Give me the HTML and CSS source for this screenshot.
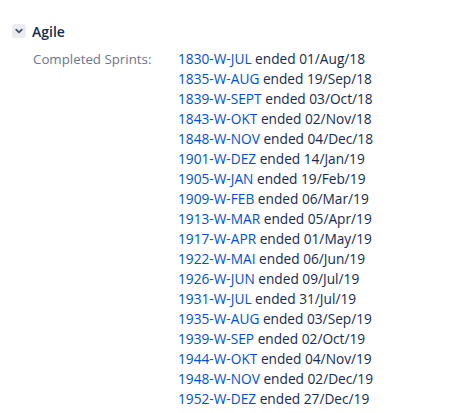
FILE: index.html
```html
<!DOCTYPE html>
<html>
<head>
<meta charset="utf-8">
<link rel="stylesheet" href="styles.css">
</head>
<body>
<div class="module">
  <div class="mod-header">
    <span class="toggle"><svg width="14" height="14" viewBox="0 0 14 14"><path d="M4.2 5.6 L7 8.4 L9.8 5.6" fill="none" stroke="#42526e" stroke-width="1.8" stroke-linecap="round" stroke-linejoin="round"/></svg></span>
    <h2 class="title">Agile</h2>
  </div>
  <div class="row">
    <div class="label">Completed Sprints:</div>
    <ul class="sprints">
      <li><a>1830-W-JUL</a> ended 01/Aug/18</li>
      <li><a>1835-W-AUG</a> ended 19/Sep/18</li>
      <li><a>1839-W-SEPT</a> ended 03/Oct/18</li>
      <li><a>1843-W-OKT</a> ended 02/Nov/18</li>
      <li><a>1848-W-NOV</a> ended 04/Dec/18</li>
      <li><a>1901-W-DEZ</a> ended 14/Jan/19</li>
      <li><a>1905-W-JAN</a> ended 19/Feb/19</li>
      <li><a>1909-W-FEB</a> ended 06/Mar/19</li>
      <li><a>1913-W-MAR</a> ended 05/Apr/19</li>
      <li><a>1917-W-APR</a> ended 01/May/19</li>
      <li><a>1922-W-MAI</a> ended 06/Jun/19</li>
      <li><a>1926-W-JUN</a> ended 09/Jul/19</li>
      <li><a>1931-W-JUL</a> ended 31/Jul/19</li>
      <li><a>1935-W-AUG</a> ended 03/Sep/19</li>
      <li><a>1939-W-SEP</a> ended 02/Oct/19</li>
      <li><a>1944-W-OKT</a> ended 04/Nov/19</li>
      <li><a>1948-W-NOV</a> ended 02/Dec/19</li>
      <li><a>1952-W-DEZ</a> ended 27/Dec/19</li>
    </ul>
  </div>
</div>
</body>
</html>
```
FILE: styles.css
```css
html, body {
  margin: 0;
  padding: 0;
  background: #fff;
}
body {
  font-family: "Open Sans", "Noto Sans", sans-serif;
  font-size: 13.7px;
  color: #172b4d;
}
.module {
  padding: 20px 0 0 12px;
}
.mod-header {
  display: flex;
  align-items: center;
  gap: 6px;
  height: 22px;
}
.toggle {
  width: 14px;
  height: 14px;
  background: #ebecf0;
  border-radius: 3px;
  display: flex;
}
.title {
  margin: 0;
  font-size: 14px;
  font-weight: 600;
  color: #172b4d;
}
.row {
  display: flex;
  margin-top: 7px;
}
.label {
  width: 145px;
  padding-left: 21px;
  color: #6b778c;
  font-size: 13.3px;
  line-height: 20px;
}
.sprints {
  list-style: none;
  margin: 0;
  padding: 0;
  line-height: 20px;
  color: #172b4d;
}
.sprints a {
  color: #0052cc;
}
```
